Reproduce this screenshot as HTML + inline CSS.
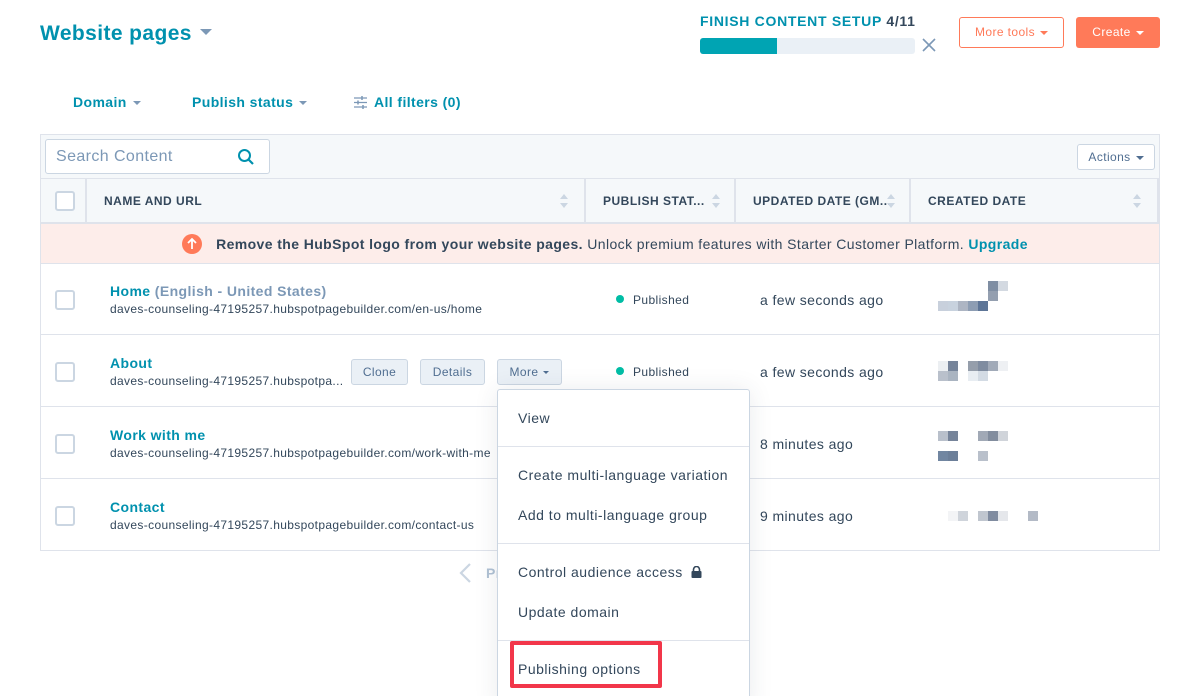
<!DOCTYPE html>
<html style="overflow:hidden"><head><meta charset="utf-8"><style>
*{box-sizing:border-box;margin:0;padding:0}
html,body{width:1199px;height:696px;overflow:hidden}
body{background:#fff;font-family:"Liberation Sans",sans-serif;color:#33475b;position:relative;letter-spacing:.4px}
.a{position:absolute}
.teal{color:#0091ae}
.caret{display:inline-block;width:0;height:0;border-left:4px solid transparent;border-right:4px solid transparent;border-top:4px solid currentColor;vertical-align:middle;margin-left:5px}
.cb{position:absolute;width:20px;height:20px;border:2px solid #cbd6e2;border-radius:3px;background:#fff}
.hd{position:absolute;top:178px;height:45px;font-size:12px;font-weight:bold;letter-spacing:.5px;line-height:46px;color:#33475b;border-right:2px solid #dfe3eb}
.sort{position:absolute;right:16px;top:16px;width:8px;height:14px}
.sort:before{content:"";position:absolute;top:0;left:0;border-left:4px solid transparent;border-right:4px solid transparent;border-bottom:5px solid #cbd6e2}
.sort:after{content:"";position:absolute;bottom:0;left:0;border-left:4px solid transparent;border-right:4px solid transparent;border-top:5px solid #cbd6e2}
.row{position:absolute;left:40px;width:1120px;height:72px;border-bottom:1px solid #dfe3eb;border-left:1px solid #dfe3eb;border-right:1px solid #dfe3eb}
.nm{position:absolute;left:69px;font-size:14px;font-weight:bold;color:#0091ae}
.url{position:absolute;left:69px;font-size:12px;color:#33475b;letter-spacing:.35px}
.pub{position:absolute;left:575px;font-size:12px;color:#33475b}
.pub:before{content:"";display:inline-block;width:8px;height:8px;border-radius:50%;background:#00bda5;margin-right:9px;vertical-align:1px}
.dt{position:absolute;left:719px;font-size:14px;color:#33475b}
.px{position:absolute;width:10px;height:10px}
.btn{position:absolute;height:26px;border:1px solid #cbd6e2;background:#eaf0f6;border-radius:3px;font-size:12px;line-height:24px;text-align:center;color:#506e91}
.mi{position:absolute;left:20px;font-size:14px;color:#33475b;letter-spacing:.5px}
.dv{position:absolute;left:0;width:100%;height:1px;background:#dfe3eb}
</style></head><body>
<div class="a teal" style="left:40px;top:22px;font-size:21px;font-weight:bold;color:#0091ae">Website pages <span class="caret" style="border-width:6px 6px 0;border-top-color:#7c98b6;vertical-align:5px;margin-left:2px"></span></div>

<div class="a" style="left:700px;top:13px;font-size:14px;font-weight:bold;letter-spacing:.7px"><span class="teal">FINISH CONTENT SETUP</span> 4/11</div>
<div class="a" style="left:700px;top:38px;width:215px;height:16px;background:#eaf0f6;border-radius:3px"></div>
<div class="a" style="left:700px;top:38px;width:77px;height:16px;background:#00a4b3;border-radius:3px 0 0 3px"></div>
<svg class="a" style="left:922px;top:38px" width="14" height="14"><path d="M1 1L13 13M13 1L1 13" stroke="#7c98b6" stroke-width="1.6"/></svg>
<div class="a" style="left:959px;top:17px;width:105px;height:31px;border:1px solid #ff7a59;border-radius:3px;color:#ff7a59;font-size:12px;line-height:29px;text-align:center">More tools<span class="caret"></span></div>
<div class="a" style="left:1076px;top:17px;width:84px;height:31px;background:#ff7a59;border-radius:3px;color:#fff;font-size:12px;line-height:31px;text-align:center">Create<span class="caret"></span></div>

<div class="a teal" style="left:73px;top:94px;font-size:14px;font-weight:bold">Domain<span class="caret" style="color:#7c98b6;margin-left:6px"></span></div>
<div class="a teal" style="left:192px;top:94px;font-size:14px;font-weight:bold">Publish status<span class="caret" style="color:#7c98b6;margin-left:6px"></span></div>
<svg class="a" style="left:354px;top:96px" width="13" height="13"><path d="M0 2H13M0 6.5H13M0 11H13" stroke="#7c98b6" stroke-width="1.2"/><path d="M8 0V4M4 4.5V8.5M9 9V13" stroke="#7c98b6" stroke-width="1.5"/></svg>
<div class="a teal" style="left:374px;top:94px;font-size:14px;font-weight:bold">All filters (0)</div>

<div class="a" style="left:40px;top:134px;width:1120px;height:89px;background:#f5f8fa;border:1px solid #dfe3eb"></div>
<div class="a" style="left:45px;top:139px;width:225px;height:35px;background:#fff;border:1px solid #cbd6e2;border-radius:3px;font-size:16px;color:#7c98b6;padding:8px 10px">Search Content</div>
<svg class="a" style="left:237px;top:148px" width="18" height="18"><circle cx="7.5" cy="7.5" r="5.5" stroke="#0091ae" stroke-width="2" fill="none"/><path d="M11.5 11.5L16 16" stroke="#0091ae" stroke-width="2.2"/></svg>
<div class="a" style="left:1077px;top:144px;width:78px;height:26px;background:#fff;border:1px solid #cbd6e2;border-radius:3px;font-size:12px;line-height:24px;text-align:center;color:#506e91">Actions<span class="caret"></span></div>
<div class="a" style="left:40px;top:178px;width:1120px;height:1px;background:#dfe3eb"></div>
<div class="hd" style="left:41px;width:46px"><div class="cb" style="left:14px;top:13px"></div></div>
<div class="hd" style="left:87px;width:499px;padding-left:17px">NAME AND URL<div class="sort"></div></div>
<div class="hd" style="left:586px;width:150px;padding-left:17px">PUBLISH STAT...<div class="sort" style="right:14px"></div></div>
<div class="hd" style="left:736px;width:175px;padding-left:17px">UPDATED DATE (GM...<div class="sort" style="right:14px"></div></div>
<div class="hd" style="left:911px;width:248px;padding-left:17px">CREATED DATE<div class="sort"></div></div>

<div class="a" style="left:40px;top:223px;width:1120px;height:41px;background:#fdedea;border:1px solid #dfe3eb;font-size:14px;text-align:center;line-height:40px;padding-left:10px;white-space:nowrap"><span style="display:inline-block;width:20px;height:20px;border-radius:50%;background:#ff7a59;vertical-align:-5px;margin-right:14px;position:relative"><svg width="20" height="20" style="position:absolute;left:0;top:0"><path d="M10 15V5M6 9L10 5L14 9" stroke="#fff" stroke-width="1.8" fill="none"/></svg></span><b>Remove the HubSpot logo from your website pages.</b> Unlock premium features with Starter Customer Platform. <b class="teal">Upgrade</b></div>

<div class="row" style="top:263px"><div class="cb" style="left:14px;top:27px"></div>
<div class="nm" style="top:20px">Home <span style="color:#7c98b6">(English - United States)</span></div>
<div class="url" style="top:39px">daves-counseling-47195257.hubspotpagebuilder.com/en-us/home</div>
<div class="pub" style="top:30px">Published</div><div class="dt" style="top:29px">a few seconds ago</div></div>
<div class="row" style="top:335px"><div class="cb" style="left:14px;top:27px"></div>
<div class="nm" style="top:20px">About</div>
<div class="url" style="top:39px">daves-counseling-47195257.hubspotpa...</div>
<div class="pub" style="top:30px">Published</div><div class="dt" style="top:29px">a few seconds ago</div></div>
<div class="btn" style="left:351px;top:359px;width:57px">Clone</div>
<div class="btn" style="left:420px;top:359px;width:65px">Details</div>
<div class="btn" style="left:497px;top:359px;width:65px">More<span class="caret" style="border-width:3px 3px 0"></span></div>
<div class="row" style="top:407px"><div class="cb" style="left:14px;top:27px"></div>
<div class="nm" style="top:20px">Work with me</div>
<div class="url" style="top:39px">daves-counseling-47195257.hubspotpagebuilder.com/work-with-me</div>
<div class="dt" style="top:29px">8 minutes ago</div></div>
<div class="row" style="top:479px"><div class="cb" style="left:14px;top:27px"></div>
<div class="nm" style="top:20px">Contact</div>
<div class="url" style="top:39px">daves-counseling-47195257.hubspotpagebuilder.com/contact-us</div>
<div class="dt" style="top:29px">9 minutes ago</div></div>

<div class="px" style="left:988px;top:281px;background:#7f8ea3"></div><div class="px" style="left:998px;top:281px;background:#d3d9e1"></div>
<div class="px" style="left:988px;top:291px;background:#949fb0"></div>
<div class="px" style="left:938px;top:301px;background:#c8d0dc"></div><div class="px" style="left:948px;top:301px;background:#c8d2de"></div><div class="px" style="left:958px;top:301px;background:#adb5c3"></div><div class="px" style="left:968px;top:301px;background:#8d9db3"></div><div class="px" style="left:978px;top:301px;background:#5d7597"></div>
<div class="px" style="left:938px;top:361px;background:#eceff2"></div><div class="px" style="left:948px;top:361px;background:#76849a"></div><div class="px" style="left:968px;top:361px;background:#959eab"></div><div class="px" style="left:978px;top:361px;background:#7f8ca0"></div><div class="px" style="left:988px;top:361px;background:#a1aab8"></div><div class="px" style="left:998px;top:361px;background:#eef0f3"></div>
<div class="px" style="left:938px;top:371px;background:#b9c0cb"></div><div class="px" style="left:948px;top:371px;background:#aab4c1"></div><div class="px" style="left:968px;top:371px;background:#e8edf2"></div><div class="px" style="left:978px;top:371px;background:#d3dbe4"></div>
<div class="px" style="left:938px;top:431px;background:#b9c0cb"></div><div class="px" style="left:948px;top:431px;background:#76849a"></div><div class="px" style="left:978px;top:431px;background:#a1a9b6"></div><div class="px" style="left:988px;top:431px;background:#828d9e"></div><div class="px" style="left:998px;top:431px;background:#d0d4da"></div>
<div class="px" style="left:938px;top:451px;background:#7186a1"></div><div class="px" style="left:948px;top:451px;background:#6c7f99"></div><div class="px" style="left:978px;top:451px;background:#b9c0cb"></div>
<div class="px" style="left:948px;top:511px;background:#f3f4f6"></div><div class="px" style="left:958px;top:511px;background:#cfd4db"></div><div class="px" style="left:978px;top:511px;background:#c0c6cf"></div><div class="px" style="left:988px;top:511px;background:#808ca0"></div><div class="px" style="left:998px;top:511px;background:#e5e7eb"></div><div class="px" style="left:1028px;top:511px;background:#b3bac6"></div>

<svg class="a" style="left:458px;top:563px" width="14" height="20"><path d="M12 1L3 10L12 19" stroke="#cbd6e2" stroke-width="2.2" fill="none"/></svg>
<div class="a" style="left:486px;top:565px;font-size:14px;color:#b0c1d4;font-weight:bold">Pr</div>

<div class="a" style="left:497px;top:389px;width:253px;height:320px;background:#fff;border:1px solid #cbd6e2;border-radius:3px;box-shadow:0 1px 24px rgba(45,62,80,.1)">
<div class="mi" style="top:20px">View</div><div class="dv" style="top:56px"></div>
<div class="mi" style="top:77px">Create multi-language variation</div>
<div class="mi" style="top:117px">Add to multi-language group</div><div class="dv" style="top:153px"></div>
<div class="mi" style="top:174px">Control audience access <svg width="11" height="12" style="vertical-align:-1px;margin-left:4px"><rect x="0.5" y="5" width="10" height="7" rx="1" fill="#33475b"/><path d="M2.5 5.5V3.5a3 3 0 0 1 6 0V5.5" stroke="#33475b" stroke-width="1.6" fill="none"/></svg></div>
<div class="mi" style="top:214px">Update domain</div><div class="dv" style="top:250px"></div>
<div class="mi" style="top:271px">Publishing options</div>
</div>
<div class="a" style="left:510px;top:641px;width:152px;height:47px;border:4px solid #f2364a;border-radius:2px"></div>
</body></html>
